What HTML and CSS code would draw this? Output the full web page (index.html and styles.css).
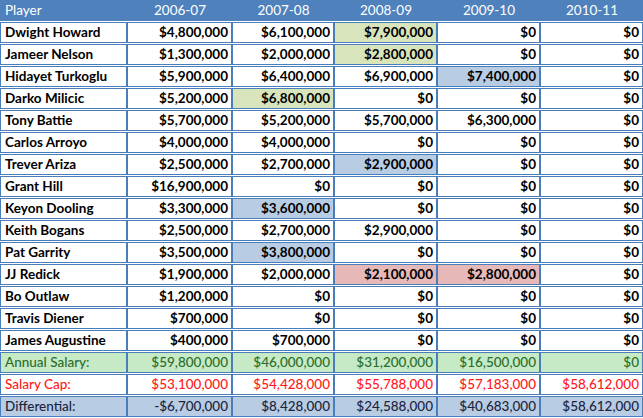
FILE: index.html
```html
<!DOCTYPE html>
<html>
<head>
<meta charset="utf-8">
<link rel="stylesheet" href="styles.css">
</head>
<body>
<table class="sheet">
  <colgroup>
    <col class="c1"><col class="c2"><col class="c3"><col class="c4"><col class="c5"><col class="c6">
  </colgroup>
  <thead>
    <tr class="head">
      <th class="name">Player</th><th>2006-07</th><th>2007-08</th><th>2008-09</th><th>2009-10</th><th>2010-11</th>
    </tr>
  </thead>
  <tbody class="players">
    <tr><td class="name">Dwight Howard</td><td>$4,800,000</td><td>$6,100,000</td><td class="hl-green">$7,900,000</td><td>$0</td><td>$0</td></tr>
    <tr><td class="name">Jameer Nelson</td><td>$1,300,000</td><td>$2,000,000</td><td class="hl-green">$2,800,000</td><td>$0</td><td>$0</td></tr>
    <tr><td class="name">Hidayet Turkoglu</td><td>$5,900,000</td><td>$6,400,000</td><td>$6,900,000</td><td class="hl-blue">$7,400,000</td><td>$0</td></tr>
    <tr><td class="name">Darko Milicic</td><td>$5,200,000</td><td class="hl-green">$6,800,000</td><td>$0</td><td>$0</td><td>$0</td></tr>
    <tr><td class="name">Tony Battie</td><td>$5,700,000</td><td>$5,200,000</td><td>$5,700,000</td><td>$6,300,000</td><td>$0</td></tr>
    <tr><td class="name">Carlos Arroyo</td><td>$4,000,000</td><td>$4,000,000</td><td>$0</td><td>$0</td><td>$0</td></tr>
    <tr><td class="name">Trever Ariza</td><td>$2,500,000</td><td>$2,700,000</td><td class="hl-blue">$2,900,000</td><td>$0</td><td>$0</td></tr>
    <tr><td class="name">Grant Hill</td><td>$16,900,000</td><td>$0</td><td>$0</td><td>$0</td><td>$0</td></tr>
    <tr><td class="name">Keyon Dooling</td><td>$3,300,000</td><td class="hl-blue">$3,600,000</td><td>$0</td><td>$0</td><td>$0</td></tr>
    <tr><td class="name">Keith Bogans</td><td>$2,500,000</td><td>$2,700,000</td><td>$2,900,000</td><td>$0</td><td>$0</td></tr>
    <tr><td class="name">Pat Garrity</td><td>$3,500,000</td><td class="hl-blue">$3,800,000</td><td>$0</td><td>$0</td><td>$0</td></tr>
    <tr><td class="name">JJ Redick</td><td>$1,900,000</td><td>$2,000,000</td><td class="hl-red">$2,100,000</td><td class="hl-red">$2,800,000</td><td>$0</td></tr>
    <tr><td class="name">Bo Outlaw</td><td>$1,200,000</td><td>$0</td><td>$0</td><td>$0</td><td>$0</td></tr>
    <tr><td class="name">Travis Diener</td><td>$700,000</td><td>$0</td><td>$0</td><td>$0</td><td>$0</td></tr>
    <tr><td class="name">James Augustine</td><td>$400,000</td><td>$700,000</td><td>$0</td><td>$0</td><td>$0</td></tr>
  </tbody>
  <tbody class="summary">
    <tr class="annual"><td class="name">Annual Salary:</td><td>$59,800,000</td><td>$46,000,000</td><td>$31,200,000</td><td>$16,500,000</td><td>$0</td></tr>
    <tr class="cap"><td class="name">Salary Cap:</td><td>$53,100,000</td><td>$54,428,000</td><td>$55,788,000</td><td>$57,183,000</td><td>$58,612,000</td></tr>
    <tr class="diff"><td class="name">Differential:</td><td>-$6,700,000</td><td>$8,428,000</td><td>$24,588,000</td><td>$40,683,000</td><td>$58,612,000</td></tr>
  </tbody>
</table>
</body>
</html>
```
FILE: styles.css
```css
html, body {
  margin: 0;
  padding: 0;
  background: #ffffff;
}

.sheet {
  border-collapse: separate;
  border-spacing: 0 1px;
  margin-top: -1px;
  table-layout: fixed;
  width: 643px;
  font-family: Lato, "Liberation Sans", sans-serif;
  font-size: 13.5px;
}

.c1 { width: 127px; }
.c2 { width: 105px; }
.c3 { width: 102px; }
.c4 { width: 103px; }
.c5 { width: 103px; }
.c6 { width: 103px; }

.sheet th,
.sheet td {
  height: 19px;
  padding: 0 3px 0 4px;
  border: 1px solid #4a7ebb;
  white-space: nowrap;
  overflow: hidden;
  line-height: 19px;
  text-align: right;
  box-sizing: content-box;
}

.head th {
  background: #4f81bd;
  color: #ffffff;
  font-weight: normal;
  text-align: center;
  border-color: #4f81bd;
}

.head th.name {
  text-align: left;
}

.players td {
  font-weight: bold;
  color: #000000;
}

.sheet td.name {
  text-align: left;
}

.hl-green { background: #d8e4bc; }
.hl-blue { background: #b8cce4; }
.hl-red { background: #e6b8b7; }

.summary td {
  font-weight: 500;
}

.annual td {
  background: #c6e9c6;
  color: #2a6e2a;
}

.cap td {
  color: #ff1a1a;
}

.diff td {
  background: #b8cce4;
  color: #1c2540;
}
```
